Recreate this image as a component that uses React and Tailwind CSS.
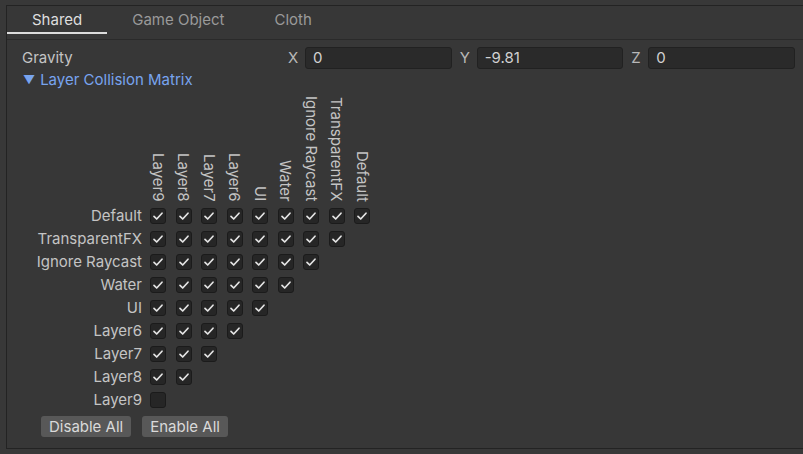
import React from 'react';

const layers = ['Default', 'TransparentFX', 'Ignore Raycast', 'Water', 'UI', 'Layer6', 'Layer7', 'Layer8', 'Layer9'];
const columns = [...layers].reverse();

const Check = ({ checked }) => (
    <div className="w-[16px] h-[16px] shrink-0 rounded-[3px] bg-[#262626] border border-[#1b1b1b] flex items-center justify-center">
        {checked && (
            <svg width="12" height="12" viewBox="0 0 12 12">
                <path d="M2 6.3 L4.7 9 L10 3.2" fill="none" stroke="#e4e4e4" strokeWidth="1.7" strokeLinecap="round" strokeLinejoin="round" />
            </svg>
        )}
    </div>
);

const VectorField = ({ axis, value }) => (
    <div className="flex-1 flex items-center">
        <span className="w-[17px] text-[#b8b8b8]">{axis}</span>
        <div className="flex-1 h-[22px] rounded-[3px] bg-[#2a2a2a] border border-[#212121] flex items-center pl-[7px] text-[#d2d2d2]">
            {value}
        </div>
    </div>
);

export default function App() {
    return (
        <div className="w-[803px] h-[454px] bg-[#383838] pt-[5px] pl-[6px] font-['Inter',sans-serif] text-[15px] overflow-hidden">
            <div className="h-[444px] border-t border-l border-b border-[#232323] bg-[#373737] flex flex-col">
                <div className="h-[34px] flex border-b border-[#2a2a2a] shrink-0">
                    <div className="px-[25px] flex items-center justify-center pb-[4px] relative text-[#dedede]">
                        Shared
                        <div className="absolute left-0 right-0 bottom-[5px] h-[2px] bg-[#dcdcdc]" />
                    </div>
                    <div className="px-[25px] flex items-center pb-[4px] text-[#9a9a9a]">Game Object</div>
                    <div className="px-[25px] flex items-center pb-[4px] text-[#9a9a9a]">Cloth</div>
                </div>

                <div className="pl-[15px] pr-[8px] pt-[7px]">
                    <div className="flex items-center h-[22px]">
                        <span className="flex-1 text-[#c4c4c4]">Gravity</span>
                        <div className="w-[507px] flex gap-[8px]">
                            <VectorField axis="X" value="0" />
                            <VectorField axis="Y" value="-9.81" />
                            <VectorField axis="Z" value="0" />
                        </div>
                    </div>

                    <div className="h-[22px] flex items-center text-[#78a4ef]">
                        <span className="text-[12px] mr-[5px] ml-[1px]">▼</span>
                        Layer Collision Matrix
                    </div>

                    <div className="flex h-[113.5px] items-end pb-[3px]">
                        <div className="w-[128px] shrink-0" />
                        <div className="flex items-end gap-[9.5px]">
                            {columns.map((name) => (
                                <div key={name} className="w-[16px] flex justify-center">
                                    <span className="[writing-mode:vertical-rl] leading-[17px] whitespace-nowrap text-[#c4c4c4]">{name}</span>
                                </div>
                            ))}
                        </div>
                    </div>

                    {layers.map((name, i) => (
                        <div key={name} className="flex items-center h-[23px]">
                            <div className="w-[120px] shrink-0 text-right text-[#c4c4c4]">{name}</div>
                            <div className="flex gap-[9.5px] ml-[8px]">
                                {columns.slice(0, 9 - i).map((c) => (
                                    <Check key={c} checked={!(name === 'Layer9' && c === 'Layer9')} />
                                ))}
                            </div>
                        </div>
                    ))}

                    <div className="flex gap-[11px] ml-[19px] mt-[4.5px]">
                        <button className="h-[21px] px-[8px] rounded-[3px] bg-[#585858] text-[#dadada] leading-none">Disable All</button>
                        <button className="h-[21px] px-[8px] rounded-[3px] bg-[#585858] text-[#dadada] leading-none">Enable All</button>
                    </div>
                </div>
            </div>
        </div>
    );
}
